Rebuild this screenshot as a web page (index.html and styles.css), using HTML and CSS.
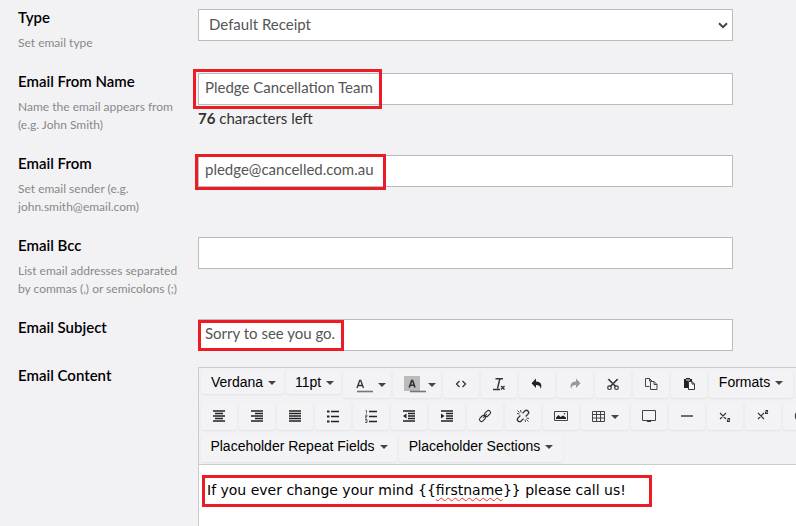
FILE: index.html
```html
<!DOCTYPE html>
<html lang="en">
<head>
<meta charset="utf-8">
<title>Email receipt settings</title>
<link rel="stylesheet" href="styles.css">
</head>
<body>
<form class="form">
  <div class="row">
    <div class="caption">
      <label class="label" for="type">Type</label>
      <p class="help">Set email type</p>
    </div>
    <div class="field">
      <select class="control select" id="type"><option>Default Receipt</option></select>
      <svg class="chevron" viewBox="0 0 10 7" aria-hidden="true"><path d="M1 1.2l4 4 4-4" fill="none" stroke="#444" stroke-width="2"/></svg>
    </div>
  </div>
  <div class="row">
    <div class="caption">
      <label class="label" for="from-name">Email From Name</label>
      <p class="help">Name the email appears from (e.g. John Smith)</p>
    </div>
    <div class="field">
      <input class="control" id="from-name" type="text" value="Pledge Cancellation Team">
      <span class="mark mark-name"></span>
      <p class="count"><b>76</b> characters left</p>
    </div>
  </div>
  <div class="row">
    <div class="caption">
      <label class="label" for="from">Email From</label>
      <p class="help">Set email sender (e.g. john.smith@email.com)</p>
    </div>
    <div class="field">
      <input class="control" id="from" type="text" value="pledge@cancelled.com.au">
      <span class="mark mark-from"></span>
    </div>
  </div>
  <div class="row">
    <div class="caption">
      <label class="label" for="bcc">Email Bcc</label>
      <p class="help">List email addresses separated by commas (,) or semicolons (;)</p>
    </div>
    <div class="field">
      <input class="control" id="bcc" type="text">
    </div>
  </div>
  <div class="row">
    <div class="caption">
      <label class="label" for="subject">Email Subject</label>
    </div>
    <div class="field">
      <input class="control" id="subject" type="text" value="Sorry to see you go.">
      <span class="mark mark-subject"></span>
    </div>
  </div>
  <div class="row">
    <div class="caption">
      <span class="label" id="content-label">Email Content</span>
    </div>
    <div class="editor">
      <div class="toolbar">
        <div class="tools">
          <button type="button" class="tool text short font">Verdana<i class="caret"></i></button>
          <button type="button" class="tool text short size">11pt<i class="caret"></i></button>
          <button type="button" class="tool split colour" aria-label="Text colour"><svg class="icon" viewBox="0 0 16 16"><path d="M1 12L3.700 4.500h1L7.500 12M2.100 9.500h4.200" fill="none" stroke="#333" stroke-width="1.300"/><path d="M1 15.500h16" stroke="#777" stroke-width="1.600"/></svg><i class="caret"></i></button>
          <button type="button" class="tool split colour" aria-label="Background colour"><svg class="icon" viewBox="0 0 16 16"><path d="M-2 0h16v15h-16z" fill="#bbb"/><path d="M3.200 11.500L5.700 4.500h.9L9 11.500M4.200 9.200h3.900" fill="none" stroke="#333" stroke-width="1.600"/><path d="M4 15.500h16" stroke="#777" stroke-width="1.600"/></svg><i class="caret"></i></button>
          <button type="button" class="tool" aria-label="Source code"><svg class="icon" viewBox="0 0 16 16"><path d="M6.500 5L3.500 8l3 3M9.500 5l3 3-3 3" fill="none" stroke="#333" stroke-width="1.300"/></svg></button>
          <button type="button" class="tool" aria-label="Clear formatting"><svg class="icon" viewBox="0 0 16 16"><path d="M4.500 2.700H12M8.800 3L6.500 12.500M2 13.500h7M10 10l3.500 3.500m0-3.500L10 13.500" fill="none" stroke="#333" stroke-width="1.400"/></svg></button>
          <button type="button" class="tool" aria-label="Undo"><svg class="icon" viewBox="0 0 16 16"><path d="M7 2.500v3c4.500 0 6.500 3 4.800 7.500-.2-2.800-1.600-4-4.800-4v3L2.500 7.300z" fill="#222"/></svg></button>
          <button type="button" class="tool" aria-label="Redo"><svg class="icon" viewBox="0 0 16 16"><path d="M9 2.500v3c-4.500 0-6.500 3-4.800 7.500.2-2.800 1.600-4 4.800-4v3l4.500-4.700z" fill="#999"/></svg></button>
          <button type="button" class="tool" aria-label="Cut"><svg class="icon" viewBox="0 0 16 16"><path d="M3 3.500L4 3l7 7-1 .5zM13 3.500L12 3l-7 7 1 .5z" fill="#222" stroke="#222" stroke-width=".5"/><circle cx="4.500" cy="11.700" r="1.800" fill="none" stroke="#333" stroke-width="1.200"/><circle cx="11.500" cy="11.700" r="1.800" fill="none" stroke="#333" stroke-width="1.200"/></svg></button>
          <button type="button" class="tool" aria-label="Copy"><svg class="icon" viewBox="0 0 16 16"><path d="M6.500 10.500h-4v-8h4l2.500 2.500v1M6.500 2.500V5H9M7.500 5.500h3.500l3 3v5H7.500zM11 5.500v3h3" fill="none" stroke="#444"/></svg></button>
          <button type="button" class="tool" aria-label="Paste"><svg class="icon" viewBox="0 0 16 16"><path d="M3 3h2V2h4v1h2v2H7v7H3z" fill="#222"/><path d="M5 4h4" stroke="#eee"/><path d="M7.500 5.500h3.500l2.500 2.500v5.500h-6zM11 5.500V8h2.500" fill="#f8f8f8" stroke="#333"/></svg></button>
          <button type="button" class="tool text formats">Formats<i class="caret"></i></button>
          <button type="button" class="tool" aria-label="More"></button>
        </div>
        <div class="tools">
          <button type="button" class="tool" aria-label="Align center"><svg class="icon" viewBox="0 0 16 16"><path d="M2 3h12M4 5.500h8M2 8h12M4 10.500h8M2 13h12" stroke="#222" stroke-width="1.400"/></svg></button>
          <button type="button" class="tool" aria-label="Align right"><svg class="icon" viewBox="0 0 16 16"><path d="M2 3h12M6 5.500h8M2 8h12M6 10.500h8M2 13h12" stroke="#222" stroke-width="1.400"/></svg></button>
          <button type="button" class="tool" aria-label="Justify"><svg class="icon" viewBox="0 0 16 16"><path d="M2 3h12M2 5.500h12M2 8h12M2 10.500h12M2 13h12" stroke="#222" stroke-width="1.400"/></svg></button>
          <button type="button" class="tool" aria-label="Bullet list"><svg class="icon" viewBox="0 0 16 16"><path d="M6 3.500h8M6 8.500h8M6 13.500h8" stroke="#222" stroke-width="1.300"/><path d="M2 2.500h2.500v2H2zM2 7.500h2.500v2H2zM2 12.500h2.500v2H2z" fill="#222"/></svg></button>
          <button type="button" class="tool" aria-label="Numbered list"><svg class="icon" viewBox="0 0 16 16"><path d="M6 3.500h8M6 8.500h8M6 13.500h8" stroke="#222" stroke-width="1.300"/><path d="M2.500 2.500h1v3M2 7h2v1.500H2.500V10H4M2 11.500h2v3H2M2.500 13H4" fill="none" stroke="#444" stroke-width=".8"/></svg></button>
          <button type="button" class="tool" aria-label="Decrease indent"><svg class="icon" viewBox="0 0 16 16"><path d="M2 3h12M7 5.500h7M7 8h7M7 10.500h7M2 13h12" stroke="#222" stroke-width="1.400"/><path d="M2 8l3.500-2.500v5z" fill="#222"/></svg></button>
          <button type="button" class="tool" aria-label="Increase indent"><svg class="icon" viewBox="0 0 16 16"><path d="M2 3h12M7 5.500h7M7 8h7M7 10.500h7M2 13h12" stroke="#222" stroke-width="1.400"/><path d="M5.500 8L2 5.500v5z" fill="#222"/></svg></button>
          <button type="button" class="tool" aria-label="Link"><svg class="icon" viewBox="0 0 16 16"><g fill="none" stroke="#333" stroke-width="1.100" transform="rotate(-45 8 8)"><rect x="1" y="6" width="7" height="4" rx="2"/><rect x="8" y="6" width="7" height="4" rx="2"/><path d="M5.500 8h5"/></g></svg></button>
          <button type="button" class="tool" aria-label="Remove link"><svg class="icon" viewBox="0 0 16 16"><g fill="none" stroke="#333" stroke-width="1.300"><g transform="rotate(-45 8 8)"><path d="M6.500 10.200H3.200a2.200 2.200 0 0 1 0-4.400h3.300M9.500 5.800h3.300a2.200 2.200 0 0 1 0 4.400H9.500"/></g><path d="M2 5.500l2.500.5M5.500 2l.5 2.500M14 10.500l-2.500-.5M10.500 14l-.5-2.500M2.500 2.500l2 2M13.500 13.500l-2-2" stroke-width=".9"/></g></svg></button>
          <button type="button" class="tool" aria-label="Image"><svg class="icon" viewBox="0 0 16 16"><path d="M1.500 3.500h13v9h-13z" fill="none" stroke="#444"/><path d="M3 11V9.500L5.500 7l2 2L10 7.500l3 2V11z" fill="#222"/><circle cx="11.500" cy="5.700" r=".8" fill="#333"/></svg></button>
          <button type="button" class="tool split" aria-label="Table"><svg class="icon" viewBox="0 0 16 16"><path d="M1.500 3.500h12v10h-12zM1.500 6.500h12M1.500 10h12M5.500 3.500v10M9.500 3.500v10" fill="none" stroke="#444"/></svg><i class="caret"></i></button>
          <button type="button" class="tool" aria-label="Preview"><svg class="icon" viewBox="0 0 16 16"><path d="M1.500 2.500h13v10h-13z" fill="none" stroke="#444"/><path d="M5 12.500h6L9.500 14h-3z" fill="#333"/></svg></button>
          <button type="button" class="tool" aria-label="Horizontal line"><svg class="icon" viewBox="0 0 16 16"><path d="M2 8h12" stroke="#333" stroke-width="1.400"/></svg></button>
          <button type="button" class="tool" aria-label="Subscript"><svg class="icon" viewBox="0 0 16 16"><path d="M3 5l6 6M9 5l-6 6M10.500 10.500h2V12h-2v1.500H13" fill="none" stroke="#333" stroke-width="1.100"/></svg></button>
          <button type="button" class="tool" aria-label="Superscript"><svg class="icon" viewBox="0 0 16 16"><path d="M3 5l6 6M9 5l-6 6M10.500 2.500h2V4h-2v1.500H13" fill="none" stroke="#333" stroke-width="1.100"/></svg></button>
          <button type="button" class="tool" aria-label="Emoticons"><svg class="icon" viewBox="0 0 16 16"><circle cx="8" cy="8" r="5.500" fill="none" stroke="#444" stroke-width="1.500"/></svg></button>
        </div>
        <div class="tools">
          <button type="button" class="tool text fields">Placeholder Repeat Fields<i class="caret"></i></button>
          <button type="button" class="tool text sections">Placeholder Sections<i class="caret"></i></button>
        </div>
      </div>
      <div class="document" role="textbox" aria-labelledby="content-label" contenteditable="true" spellcheck="false">If you ever change your mind {{<span class="misspelt">firstname</span>}} please call us!</div>
      <span class="mark mark-content"></span>
    </div>
  </div>
</form>
</body>
</html>
```
FILE: styles.css
```css
* { box-sizing: border-box; }

body {
  display: flex;
  flex-direction: column;
  margin: 0;
  min-height: 100vh;
  overflow-x: hidden;
  background: #f2f2f5;
  color: #333;
  font-family: Lato, "Liberation Sans", sans-serif;
  font-size: 15px;
}

.form {
  display: flex;
  flex: 1;
  flex-direction: column;
  gap: 16px;
  padding: 9px 63px 0 18px;
}

.row {
  display: grid;
  grid-template-columns: 180px minmax(0, 1fr);
}

.row:last-child { flex: 1; }

.caption { padding-right: 18px; }

.label {
  display: block;
  color: #000;
  font-weight: 600;
  line-height: 16px;
}

.help {
  margin: 9px 0 5px;
  color: #888;
  font-size: 12px;
  line-height: 18px;
}

.field,
.editor { position: relative; }

.control {
  display: block;
  width: 100%;
  height: 32px;
  padding: 0 6px 4px;
  border: 1px solid #bbbbc0;
  border-radius: 0;
  background: #fff;
  color: #555;
  font: inherit;
}

.select {
  appearance: none;
  padding: 0 10px 2px;
}

.chevron {
  position: absolute;
  top: 13px;
  right: 5px;
  width: 10px;
  height: 7px;
}

.count {
  margin: 4px 0 0;
  line-height: 18px;
}

.mark {
  position: absolute;
  border: 3px solid #ed1c24;
  pointer-events: none;
}

.mark-name { top: -4px; left: -5px; width: 189px; height: 40px; }
.mark-from { top: -1px; left: -3px; width: 191px; height: 36px; }
.mark-subject { top: 1px; left: 0; width: 146px; height: 31px; }
.mark-content { top: 107px; left: 3px; width: 450px; height: 32px; }

.editor {
  display: flex;
  flex-direction: column;
  margin-right: -63px;
  border: 1px solid #ccc;
  border-width: 1px 0 0 1px;
}

.toolbar {
  display: flex;
  flex-direction: column;
  gap: 4px;
  padding: 2px 0 2px 2px;
  border-bottom: 1px solid #ccc;
  overflow: hidden;
}

.tools {
  display: flex;
  gap: 2px;
}

.tool {
  display: flex;
  flex: none;
  align-items: center;
  justify-content: center;
  width: 36px;
  height: 28px;
  padding: 0;
  border: 0;
  border-radius: 3px;
  background: #f3f3f5;
  box-shadow: 0 1px 2px #e2e2e6;
  color: #000;
  font-family: "Liberation Sans", Arial, sans-serif;
  font-size: 14px;
}

.split {
  width: 48px;
  gap: 4px;
}

.colour {
  gap: 6px;
  padding-left: 8px;
}

.text {
  gap: 5px;
  padding-bottom: 4px;
}

.short {
  height: 24px;
  padding: 0 0 0 2px;
}

.font { width: 83px; }
.size { width: 55px; }
.formats { width: 84px; }
.fields { width: 196px; }
.sections { width: 164px; }

.icon {
  width: 16px;
  height: 16px;
  overflow: visible;
}

.caret {
  margin-top: 1px;
  border: 4px solid transparent;
  border-top-color: #444;
  border-bottom: 0;
}

.document {
  flex: 1;
  padding: 16px 8px 8px;
  background: #fff;
  color: #000;
  font-family: Verdana, "DejaVu Sans", sans-serif;
  font-size: 14px;
  line-height: 18px;
  outline: 0;
}

.misspelt {
  text-decoration: underline wavy #e33 1px;
  text-underline-offset: 2px;
}
```
